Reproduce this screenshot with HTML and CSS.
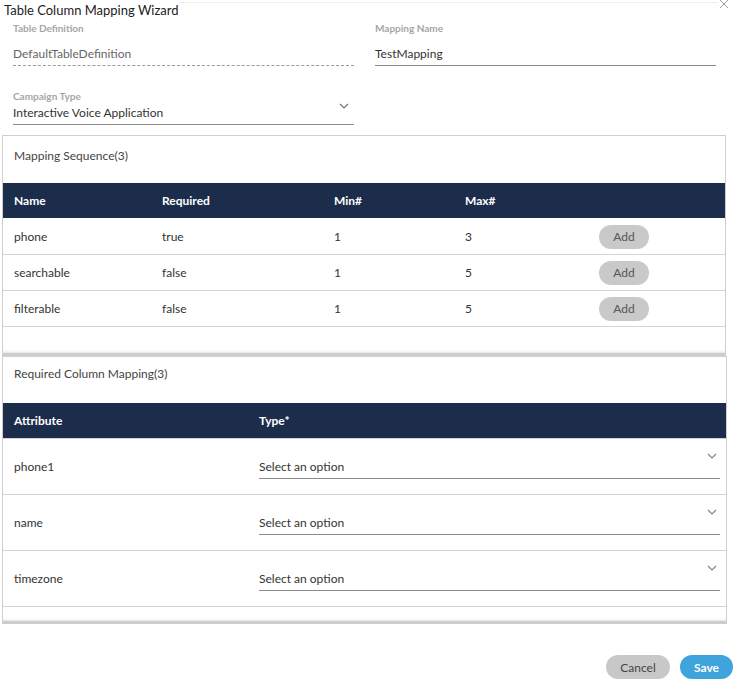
FILE: index.html
```html
<!DOCTYPE html>
<html>
<head>
<meta charset="utf-8">
<link rel="stylesheet" href="styles.css">
</head>
<body>
<div class="dialog">
  <div class="head">
    <div class="title">Table Column Mapping Wizard</div>
    <div class="head-line"></div>
    <div class="close">
      <svg width="10" height="10" viewBox="0 0 10 10"><path d="M1 1L9 9M9 1L1 9" stroke="#9a9a9a" stroke-width="1" fill="none"/></svg>
    </div>
  </div>

  <div class="form">
    <div class="field">
      <div class="label">Table Definition</div>
      <div class="value readonly">DefaultTableDefinition</div>
    </div>
    <div class="field">
      <div class="label">Mapping Name</div>
      <div class="value">TestMapping</div>
    </div>
    <div class="field select-field">
      <div class="label">Campaign Type</div>
      <div class="value sel">Interactive Voice Application
        <svg class="chev" width="10" height="6" viewBox="0 0 10 6"><path d="M1 1L5 5L9 1" stroke="#777" stroke-width="1.2" fill="none"/></svg>
      </div>
    </div>
  </div>

  <div class="panel">
    <div class="panel-title">Mapping Sequence(3)</div>
    <div class="seq-row seq-head">
      <div>Name</div><div>Required</div><div>Min#</div><div>Max#</div><div></div>
    </div>
    <div class="seq-row">
      <div>phone</div><div>true</div><div>1</div><div>3</div><div><button class="add">Add</button></div>
    </div>
    <div class="seq-row">
      <div>searchable</div><div>false</div><div>1</div><div>5</div><div><button class="add">Add</button></div>
    </div>
    <div class="seq-row">
      <div>filterable</div><div>false</div><div>1</div><div>5</div><div><button class="add">Add</button></div>
    </div>
    <div class="panel-foot seq-foot"></div>
  </div>

  <div class="panel panel2">
    <div class="panel-title title2">Required Column Mapping(3)</div>
    <div class="map-row map-head">
      <div>Attribute</div><div>Type*</div>
    </div>
    <div class="map-row">
      <div>phone1</div>
      <div class="opt">Select an option
        <svg class="chev2" width="10" height="6" viewBox="0 0 10 6"><path d="M1 1L5 5L9 1" stroke="#888" stroke-width="1.2" fill="none"/></svg>
      </div>
    </div>
    <div class="map-row">
      <div>name</div>
      <div class="opt">Select an option
        <svg class="chev2" width="10" height="6" viewBox="0 0 10 6"><path d="M1 1L5 5L9 1" stroke="#888" stroke-width="1.2" fill="none"/></svg>
      </div>
    </div>
    <div class="map-row">
      <div>timezone</div>
      <div class="opt">Select an option
        <svg class="chev2" width="10" height="6" viewBox="0 0 10 6"><path d="M1 1L5 5L9 1" stroke="#888" stroke-width="1.2" fill="none"/></svg>
      </div>
    </div>
    <div class="panel-foot map-foot"></div>
  </div>

  <div class="actions">
    <button class="btn cancel">Cancel</button>
    <button class="btn save">Save</button>
  </div>
</div>
</body>
</html>
```

FILE: styles.css
```css
* { box-sizing: border-box; }
html, body { margin: 0; padding: 0; background: #fff; }
body {
  font-family: "Segoe UI", Lato, "Open Sans", sans-serif;
  font-size: 12px;
  color: #333;
}
.dialog { width: 736px; height: 683px; position: relative; }

.head { display: flex; align-items: flex-start; height: 20px; }
.title { font-size: 13px; color: #222; padding: 2px 0 0 4px; line-height: 16px; white-space: nowrap; }
.head-line { flex: 1; border-top: 1px solid #eee; margin-top: 2px; }
.close { width: 16px; padding-left: 1px; margin-right: 2px; line-height: 0; margin-top: -1px; }

.form {
  display: grid;
  grid-template-columns: 341px 341px;
  column-gap: 21px;
  padding: 1px 0 0 13px;
  row-gap: 23px;
}
.field { position: relative; }
.label { font-size: 10px; font-weight: 700; color: #a6a6a6; line-height: 14px; height: 14px; }
.value {
  margin-top: 11px;
  line-height: 16px;
  padding-bottom: 3px;
  font-size: 12px;
  color: #333;
  border-bottom: 1px solid #8a8a8a;
  position: relative;
}
.value.readonly { color: #666; border-bottom: 1px dashed #9a9a9a; }
.select-field .value { margin-top: 2px; }
.chev { position: absolute; right: 5px; top: -2px; }

.panel {
  margin: 10px 0 0 2px;
  width: 724px;
  border: 1px solid #cfcfcf;
  border-bottom: none;
}
.panel2 { margin-top: 0; width: 725px; }
.panel-title { height: 47px; padding: 12px 0 0 11px; font-size: 12px; color: #444; line-height: 16px; }
.title2 { height: 46px; padding-top: 9px; }

.seq-row {
  display: grid;
  grid-template-columns: 148px 172px 131px 134px 1fr;
  height: 36px;
  align-items: center;
  padding-left: 11px;
  border-bottom: 1px solid #d4d4d4;
  color: #333;
}
.seq-head, .map-head {
  background: #1b2d4b;
  color: #fff;
  font-weight: 700;
  height: 35px;
  border-bottom: 1px solid #fff;
}
.seq-head { height: 36px; }
.add {
  width: 50px;
  height: 24px;
  border: none;
  border-radius: 12px;
  background: #c9c9c9;
  color: #555;
  font-family: inherit;
  font-size: 12px;
  padding: 0;
}
.panel-foot { border-bottom: 3px solid #cdcdcd; box-shadow: inset 0 -4px 3px -3px #e2e2e2; }
.seq-foot { height: 29px; }
.map-foot { height: 17px; }

.map-row {
  display: grid;
  grid-template-columns: 245px 1fr;
  height: 56px;
  align-items: start;
  padding: 0 6px 0 11px;
  border-bottom: 1px solid #d4d4d4;
}
.map-head { height: 36px; align-items: center; }
.map-row > div:first-child { padding-top: 20px; line-height: 16px; }
.map-head > div:first-child { padding-top: 0; }
.opt {
  margin-top: 20px;
  line-height: 16px;
  padding-bottom: 3px;
  border-bottom: 1px solid #8a8a8a;
  position: relative;
}
.map-head .opt { margin: 0; }
.chev2 { position: absolute; right: 3px; top: -6px; }

.actions {
  display: flex;
  justify-content: flex-end;
  gap: 10px;
  padding: 31px 3px 0 0;
}
.btn {
  height: 24px;
  border: none;
  border-radius: 12px;
  font-family: inherit;
  font-size: 12px;
  padding: 0;
}
.cancel { width: 64px; background: #c8c8c8; color: #444; }
.save { width: 53px; background: #3fa3dc; color: #fff; font-weight: 700; }
```
